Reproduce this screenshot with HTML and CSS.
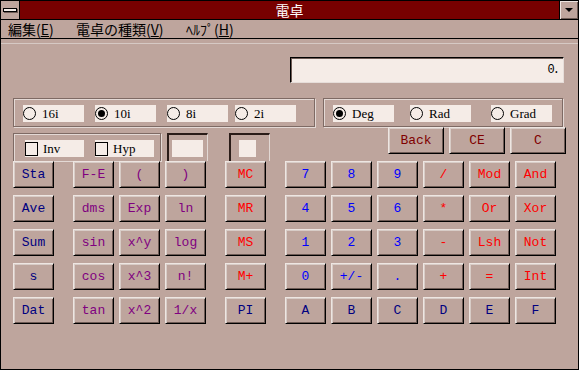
FILE: index.html
```html
<!DOCTYPE html>
<html lang="ja">
<head>
<meta charset="utf-8">
<title>電卓</title>
<link rel="stylesheet" href="styles.css">
</head>
<body>
<div class="win">
  <div class="titlebar">
    <div class="sysbtn"><span class="dash"></span></div>
    <div class="title">電卓</div>
    <div class="dropbtn"><span class="tri"></span></div>
  </div>
  <div class="menubar">
    <span class="menu">編集(<u>E</u>)</span>
    <span class="menu">電卓の種類(<u>V</u>)</span>
    <span class="menu">ﾍﾙﾌﾟ(<u>H</u>)</span>
  </div>
  <div class="client">
    <div class="sep"></div>
    <div class="row-display"><div class="display">0.</div></div>
    <div class="row-radios">
      <div class="group base">
        <div class="opt w61"><span class="radio"></span>16i</div>
        <div class="opt w61 m11"><span class="radio on"></span>10i</div>
        <div class="opt w61 m11"><span class="radio"></span>8i</div>
        <div class="opt w61 m7"><span class="radio"></span>2i</div>
      </div>
      <div class="group angle">
        <div class="opt w61"><span class="radio on"></span>Deg</div>
        <div class="opt w61 m16"><span class="radio"></span>Rad</div>
        <div class="opt w61 m20"><span class="radio"></span>Grad</div>
      </div>
    </div>
    <div class="row-mid">
      <div class="group checks">
        <div class="opt w59"><span class="check"></span>Inv</div>
        <div class="opt w59 m11"><span class="check"></span>Hyp</div>
      </div>
      <div class="sunk s1"><div class="field wide"></div></div>
      <div class="sunk s2"><div class="field narrow"></div></div>
      <div class="ctrl">
        <button class="key wide-key dred">Back</button>
        <button class="key wide-key dred">CE</button>
        <button class="key wide-key dred">C</button>
      </div>
    </div>
    <div class="keys">
      <div class="krow">
        <button class="key navy">Sta</button>
        <button class="key purple g">F-E</button>
        <button class="key purple">(</button>
        <button class="key purple">)</button>
        <button class="key red g">MC</button>
        <button class="key blue g">7</button>
        <button class="key blue">8</button>
        <button class="key blue">9</button>
        <button class="key red">/</button>
        <button class="key red">Mod</button>
        <button class="key red">And</button>
      </div>
      <div class="krow">
        <button class="key navy">Ave</button>
        <button class="key purple g">dms</button>
        <button class="key purple">Exp</button>
        <button class="key purple">ln</button>
        <button class="key red g">MR</button>
        <button class="key blue g">4</button>
        <button class="key blue">5</button>
        <button class="key blue">6</button>
        <button class="key red">*</button>
        <button class="key red">Or</button>
        <button class="key red">Xor</button>
      </div>
      <div class="krow">
        <button class="key navy">Sum</button>
        <button class="key purple g">sin</button>
        <button class="key purple">x^y</button>
        <button class="key purple">log</button>
        <button class="key red g">MS</button>
        <button class="key blue g">1</button>
        <button class="key blue">2</button>
        <button class="key blue">3</button>
        <button class="key red">-</button>
        <button class="key red">Lsh</button>
        <button class="key red">Not</button>
      </div>
      <div class="krow">
        <button class="key navy">s</button>
        <button class="key purple g">cos</button>
        <button class="key purple">x^3</button>
        <button class="key purple">n!</button>
        <button class="key red g">M+</button>
        <button class="key blue g">0</button>
        <button class="key blue">+/-</button>
        <button class="key blue">.</button>
        <button class="key red">+</button>
        <button class="key red">=</button>
        <button class="key red">Int</button>
      </div>
      <div class="krow">
        <button class="key navy">Dat</button>
        <button class="key purple g">tan</button>
        <button class="key purple">x^2</button>
        <button class="key purple">1/x</button>
        <button class="key navy g">PI</button>
        <button class="key navy g">A</button>
        <button class="key navy">B</button>
        <button class="key navy">C</button>
        <button class="key navy">D</button>
        <button class="key navy">E</button>
        <button class="key navy">F</button>
      </div>
    </div>
  </div>
</div>
</body>
</html>
```
FILE: styles.css
```css
html, body {
  margin: 0;
  padding: 0;
  background: #bea59d;
}

.win {
  width: 579px;
  height: 370px;
  box-sizing: border-box;
  border: 1px solid #000;
  background: #bea59d;
  display: flex;
  flex-direction: column;
  overflow: hidden;
}

/* title bar */
.titlebar {
  height: 19px;
  box-sizing: border-box;
  border-bottom: 1px solid #000;
  background: #780000;
  display: flex;
}
.sysbtn {
  width: 18px;
  border-right: 1px solid #000;
  background: #bea59d;
  display: flex;
  align-items: center;
  justify-content: center;
}
.dash {
  width: 12px;
  height: 2px;
  background: #f4ece8;
  border: 1px solid #000;
  box-shadow: 1px 1px 0 #6e5b55;
}
.title {
  flex: 1;
  text-align: center;
  color: #fff;
  font: 14px/18px "Noto Sans CJK JP", sans-serif;
}
.dropbtn {
  width: 18px;
  border-left: 1px solid #000;
  background: #bea59d;
  box-shadow: inset 1px 1px 0 #ece4e0, inset -1px -1px 0 #6e5b55;
  display: flex;
  align-items: center;
  justify-content: center;
}
.tri {
  width: 0;
  height: 0;
  border-left: 4px solid transparent;
  border-right: 4px solid transparent;
  border-top: 4px solid #000;
}

/* menu bar */
.menubar {
  height: 19px;
  box-sizing: border-box;
  border-bottom: 1px solid #000;
  display: grid;
  grid-template-columns: 68px 110px auto;
  padding-left: 7px;
  font: 14px/18px "Noto Sans CJK JP", sans-serif;
  color: #000;
}
.menu u {
  text-underline-offset: 1px;
}

/* client area */
.client {
  flex: 1;
  padding: 0 12px;
  display: flex;
  flex-direction: column;
}
.sep {
  margin-top: 4px;
  height: 1px;
  margin-left: -12px;
  margin-right: -12px;
  background: #d6c9c4;
}
.row-display {
  margin-top: 13px;
  display: flex;
  justify-content: flex-end;
}
.display {
  width: 274px;
  height: 26px;
  box-sizing: border-box;
  margin-right: 2px;
  background: #f5ece7;
  border-top: 1px solid #000;
  border-left: 1px solid #000;
  border-right: 1px solid #e6ddd9;
  border-bottom: 1px solid #e6ddd9;
  box-shadow: inset 1px 1px 0 #6e5b55;
  text-align: right;
  padding-right: 5px;
  font: 12px/24px "Liberation Mono", monospace;
  letter-spacing: -2px;
  color: #000;
}

/* group boxes */
.group {
  box-sizing: border-box;
  border: 1px solid #7e6a64;
  box-shadow: inset 1px 1px 0 #e4d9d5, 1px 1px 0 #e4d9d5;
  display: flex;
  align-items: flex-start;
}
.row-radios {
  margin-top: 15px;
  display: flex;
}
.base {
  width: 302px;
  height: 29px;
  padding: 6px 0 0 9px;
}
.angle {
  width: 240px;
  height: 29px;
  margin-left: 8px;
  padding: 6px 0 0 9px;
}
.opt {
  height: 17px;
  background: #f5ece7;
  display: flex;
  align-items: center;
  font: 13px/17px "Liberation Serif", serif;
  color: #000;
}
.w61 { width: 61px; }
.w59 { width: 59px; }
.m7 { margin-left: 7px; }
.m11 { margin-left: 11px; }
.m16 { margin-left: 16px; }
.m20 { margin-left: 20px; }

.radio {
  width: 13px;
  height: 13px;
  box-sizing: border-box;
  border: 1px solid #000;
  border-radius: 50%;
  margin-right: 6px;
  display: flex;
  align-items: center;
  justify-content: center;
  flex: none;
}
.radio.on::after {
  content: "";
  width: 7px;
  height: 7px;
  border-radius: 50%;
  background: #000;
}
.check {
  width: 13px;
  height: 14px;
  box-sizing: border-box;
  border: 1px solid #000;
  margin-right: 5px;
  flex: none;
}

/* middle row */
.row-mid {
  height: 34px;
  display: flex;
  align-items: flex-start;
}
.checks {
  width: 148px;
  height: 28px;
  margin-top: 6px;
  border-bottom: none;
  padding: 6px 0 0 11px;
}
.sunk {
  box-sizing: border-box;
  width: 41px;
  height: 28px;
  margin-top: 6px;
  border-top: 2px solid #2a1c18;
  border-left: 2px solid #2a1c18;
  border-right: 1px solid #e2d8d4;
  padding-top: 5px;
}
.s1 {
  margin-left: 6px;
  padding-left: 3px;
}
.s2 {
  margin-left: 21px;
  padding-left: 8px;
}
.field {
  height: 17px;
  background: #f5ece7;
}
.field.wide { width: 31px; }
.field.narrow { width: 17px; }

.ctrl {
  margin-left: auto;
  display: flex;
  gap: 5px;
}

/* keys */
.keys {
  display: flex;
  flex-direction: column;
  gap: 7px;
}
.krow {
  display: flex;
  gap: 5px;
}
.key {
  width: 41px;
  height: 27px;
  box-sizing: border-box;
  margin: 0;
  padding: 0;
  background: #bea59d;
  border: 1px solid;
  border-color: #eee6e2 #000 #000 #eee6e2;
  box-shadow: inset 1px 1px 0 #d8ccc7, inset -1px -1px 0 #6e5b55;
  border-radius: 0;
  font: 13px/1 "Liberation Mono", monospace;
  display: flex;
  align-items: center;
  justify-content: center;
}
.key.g { margin-left: 14px; }
.wide-key { width: 56px; }

.navy { color: #000080; }
.purple { color: #800080; }
.red { color: #ff0000; }
.blue { color: #0000ff; }
.dred { color: #800000; }
```
